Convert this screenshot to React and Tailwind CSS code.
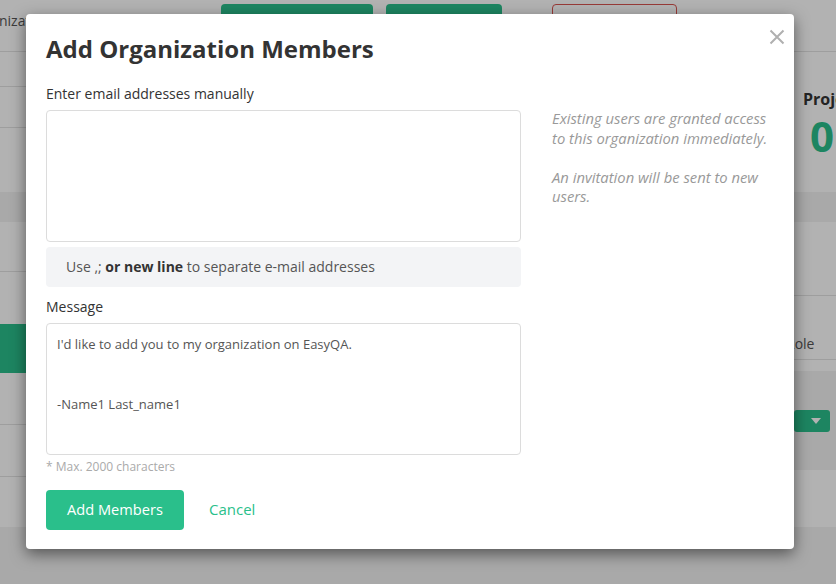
import React from "react";

export default function App() {
  return (
    <div className="relative h-[584px] w-[836px] overflow-hidden bg-[#f3f3f3] font-['Open_Sans',sans-serif] text-[#333]">
      {/* Background page */}
      <div className="flex h-[52px] items-start border-b border-[#e2e2e2] bg-white">
        <div className="ml-[-33px] mt-[11px] shrink-0 whitespace-nowrap text-[14px] leading-[20px] text-[#555]">Organizations</div>
        <div className="ml-[42px] mt-[11px] shrink-0 whitespace-nowrap text-[14px] leading-[20px] text-[#555]">My Projects</div>
        <div className="ml-[46px] mt-[4px] h-[36px] w-[152px] shrink-0 rounded-[4px] bg-[#2abf8b]"></div>
        <div className="ml-[13px] mt-[4px] h-[36px] w-[116px] shrink-0 rounded-[4px] bg-[#2abf8b]"></div>
        <div className="ml-[50px] mt-[4px] h-[36px] w-[125px] shrink-0 rounded-[4px] border border-[#d9534f]"></div>
      </div>
      <div className="flex h-[475px] bg-white">
        <div className="flex w-[200px] shrink-0 flex-col">
          <div className="h-[35px] border-b border-[#e2e2e2]"></div>
          <div className="h-[41px] border-b border-[#e2e2e2]"></div>
          <div className="h-[64px]"></div>
          <div className="h-[30px] bg-[#f3f3f3]"></div>
          <div className="h-[50px] border-b border-[#e2e2e2]"></div>
          <div className="h-[52px]"></div>
          <div className="h-[49px] bg-[#2abf8b]"></div>
          <div className="h-[52px] border-b border-[#e2e2e2]"></div>
          <div className="h-[52px] border-b border-[#e2e2e2]"></div>
          <div className="h-[50px]"></div>
        </div>
        <div className="flex min-w-0 flex-1 flex-col">
          <div className="flex h-[140px] pl-[603px]">
            <div className="flex shrink-0 flex-col whitespace-nowrap pt-[36px]">
              <div className="text-[16px] font-bold leading-[22px] text-[#333]">Projects</div>
              <div className="mt-[2px] pl-[7px] text-[42px] font-bold leading-[48px] text-[#2abf8b]">0</div>
            </div>
          </div>
          <div className="h-[30px] bg-[#f3f3f3]"></div>
          <div className="h-[74px] border-b border-[#e2e2e2]"></div>
          <div className="flex h-[64px] items-end border-b border-[#e2e2e2] pb-[5px] pl-[586px]">
            <span className="shrink-0 text-[14px] leading-[20px] text-[#555]">Role</span>
          </div>
          <div className="h-[11px]"></div>
          <div className="flex h-[99px] bg-[#f3f3f3] pl-[594px] pt-[39px]">
            <div className="flex h-[22px] w-[36px] shrink-0 items-center justify-end rounded-[3px] bg-[#2abf8b] pr-[9px]">
              <svg width="10" height="6" viewBox="0 0 10 6"><path d="M0 0 L10 0 L5 6 Z" fill="#fff" /></svg>
            </div>
          </div>
          <div className="h-[57px]"></div>
        </div>
      </div>

      {/* Overlay */}
      <div className="absolute inset-0 bg-black/30"></div>

      {/* Modal */}
      <div className="absolute left-[26px] top-[14px] h-[535px] w-[768px] rounded-[4px] bg-white px-[20px] pt-[20px] shadow-[0_5px_15px_rgba(0,0,0,0.5)]">
        <button className="absolute right-[9px] top-[15px] flex h-[16px] w-[16px] items-center justify-center">
          <svg width="16" height="16" viewBox="0 0 16 16">
            <path d="M1.5 1.5 L14.5 14.5 M14.5 1.5 L1.5 14.5" stroke="#b0b0b0" strokeWidth="2" />
          </svg>
        </button>
        <h2 className="text-[24px] font-bold leading-[30px] text-[#333]">Add Organization Members</h2>
        <div className="mt-[20px] flex">
          <div className="flex w-[475px] shrink-0 flex-col">
            <label className="text-[14px] leading-[20px] text-[#333]">Enter email addresses manually</label>
            <textarea className="mt-[6px] h-[132px] w-full resize-none rounded-[4px] border border-[#dcdcdc] px-[10px] py-[11px] text-[13px] leading-[20px] text-[#555] outline-none"></textarea>
            <div className="mt-[5px] flex h-[40px] items-center rounded-[4px] bg-[#f3f4f6] px-[20px] pb-[1px] text-[14px] text-[#555]">
              <span>
                Use ,; <b className="font-bold text-[#333]">or new line</b> to separate e-mail addresses
              </span>
            </div>
            <label className="mt-[10px] text-[14px] leading-[20px] text-[#333]">Message</label>
            <textarea
              className="mt-[6px] h-[132px] w-full resize-none rounded-[4px] border border-[#dcdcdc] px-[10px] pb-[11px] pt-[10px] text-[13px] leading-[20px] text-[#555] outline-none"
              defaultValue={"I'd like to add you to my organization on EasyQA.\n\n\n-Name1 Last_name1"}
            ></textarea>
            <div className="mt-[3px] text-[12px] leading-[17px] text-[#aaa]">* Max. 2000 characters</div>
            <div className="mt-[15px] flex items-center">
              <button className="h-[40px] w-[138px] rounded-[4px] bg-[#2abf8b] pb-[1px] text-[14.6px] text-white">Add Members</button>
              <button className="ml-[25px] pb-[1px] text-[15px] text-[#2abf8b]">Cancel</button>
            </div>
          </div>
          <div className="ml-[31px] min-w-0 flex-1 pt-[25px] text-[14.8px] italic leading-[19.5px] text-[#999]">
            <p>Existing users are granted access to this organization immediately.</p>
            <p className="mt-[19.5px]">An invitation will be sent to new users.</p>
          </div>
        </div>
      </div>
    </div>
  );
}
